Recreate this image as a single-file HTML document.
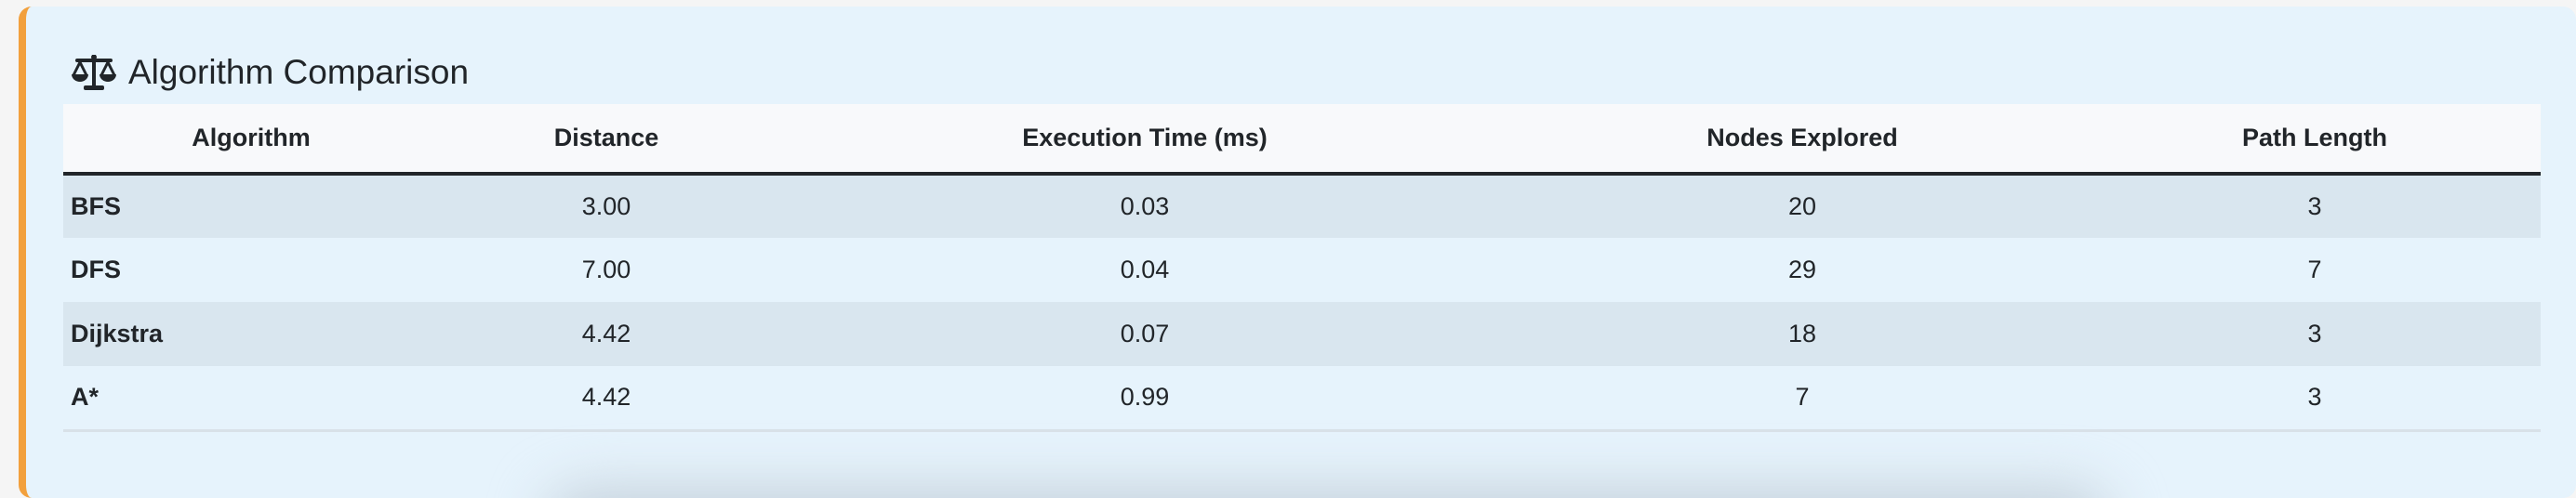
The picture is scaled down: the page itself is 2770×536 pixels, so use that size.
<!DOCTYPE html>
<html><head><style>
*{margin:0;padding:0;box-sizing:border-box}
html,body{width:2770px;height:536px;overflow:hidden;background:#f5f5f5;font-family:"Liberation Sans",sans-serif;color:#212529}
.card{position:absolute;left:20px;top:7px;width:2750px;height:529px;background:#e6f3fc;border-left:8px solid #f2a03d;border-radius:14px;overflow:hidden}
.title{position:absolute;left:48px;top:44px;font-size:37px;line-height:54px;display:flex;align-items:center;color:#212529}
.title svg{margin-right:12px}
table{position:absolute;left:40px;top:105px;width:2664px;border-collapse:collapse;font-size:27px}
th{height:75px;background:#f8f9fb;font-weight:bold;text-align:center;border-bottom:4px solid #212529}
td{height:69px;text-align:center}
td:first-child{text-align:left;padding-left:8px;font-weight:bold}
tr.s td{background:#d9e6ef}
tr.last td{border-bottom:3px solid #d8e1e8}
.shadow{position:absolute;left:560px;top:520px;width:1680px;height:80px;border-radius:40px;background:#c4d0da;filter:blur(30px)}
</style></head><body>
<div class="card">
<div class="shadow"></div>
<div class="title"><svg width="50" height="38" viewBox="0 0 50 38">
<rect x="23" y="0" width="4" height="36" fill="#212529"/>
<circle cx="25" cy="2.5" r="3" fill="#212529"/>
<rect x="5" y="4" width="40" height="4" rx="2" fill="#212529"/>
<rect x="14" y="33" width="22" height="5" rx="2" fill="#212529"/>
<path d="M10 8 L3 22 M10 8 L17 22" stroke="#212529" stroke-width="3" fill="none"/>
<path d="M1 21 H19 A9 8 0 0 1 1 21 Z" fill="#212529"/>
<path d="M40 8 L33 22 M40 8 L47 22" stroke="#212529" stroke-width="3" fill="none"/>
<path d="M31 21 H49 A9 8 0 0 1 31 21 Z" fill="#212529"/>
</svg>Algorithm Comparison</div>
<table>
<colgroup><col style="width:404px"><col style="width:360px"><col style="width:798px"><col style="width:616px"><col style="width:486px"></colgroup>
<tr><th>Algorithm</th><th>Distance</th><th>Execution Time (ms)</th><th>Nodes Explored</th><th>Path Length</th></tr>
<tr class="s"><td>BFS</td><td>3.00</td><td>0.03</td><td>20</td><td>3</td></tr>
<tr><td>DFS</td><td>7.00</td><td>0.04</td><td>29</td><td>7</td></tr>
<tr class="s"><td>Dijkstra</td><td>4.42</td><td>0.07</td><td>18</td><td>3</td></tr>
<tr class="last"><td>A*</td><td>4.42</td><td>0.99</td><td>7</td><td>3</td></tr>
</table>
</div>
</body></html>
